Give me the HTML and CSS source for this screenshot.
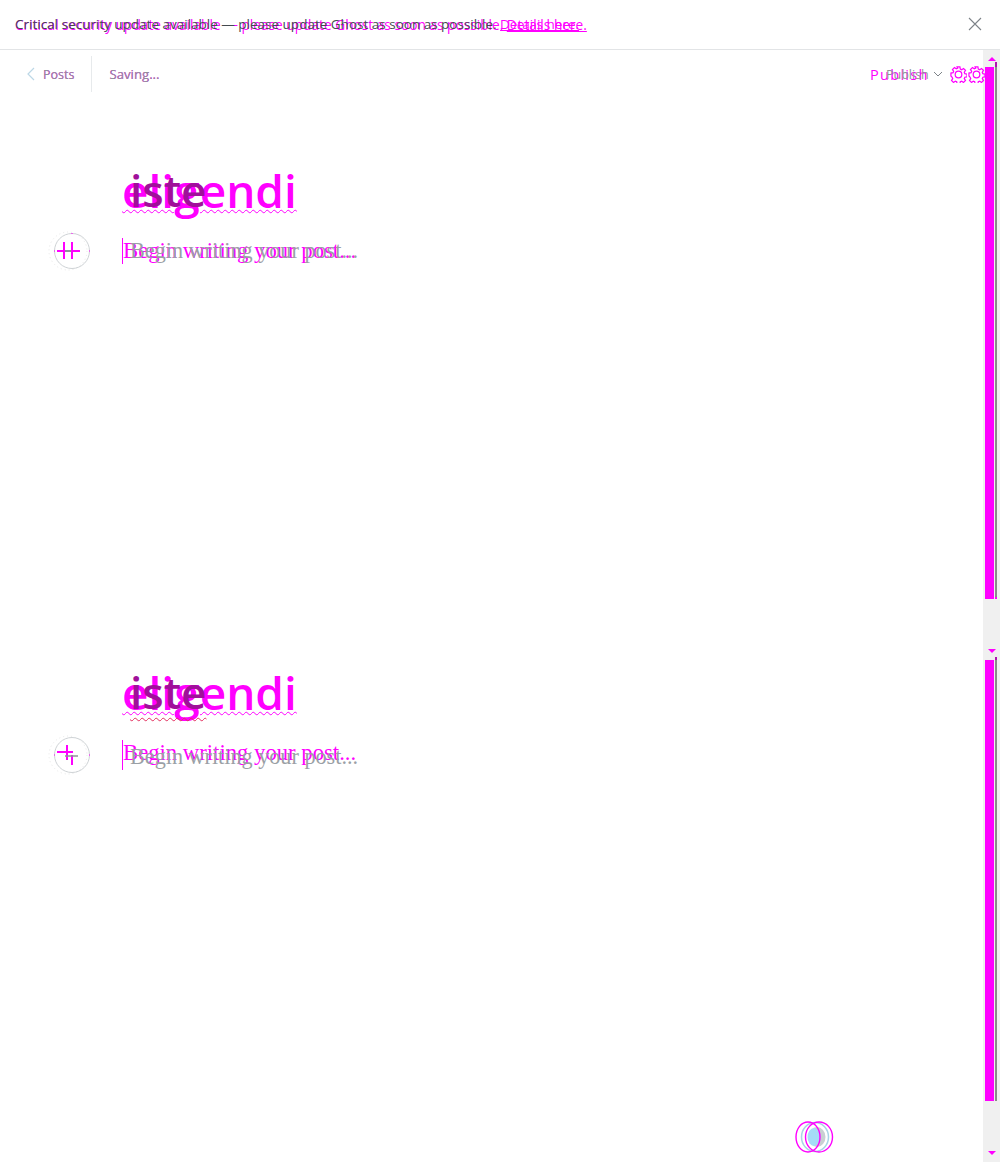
FILE: index.html
```html
<!DOCTYPE html>
<html lang="en">
  <head>
    <meta charset="UTF-8" />
    <meta name="viewport" content="width=device-width, initial-scale=1.0" />
    <title>editor</title>
    <link rel="stylesheet" href="styles.css">
  </head>
  <body>
    <div class="alert">
      <div class="alert__stack">
        <p class="alert__text alert__text--pink">Critical security update available — please update Ghost as soon as possible. <a href="#">Details here.</a></p>
        <p class="alert__text alert__text--dark">Critical security update available — please update Ghost as soon as possible. <a href="#">Details here.</a></p>
      </div>
      <svg class="alert__close" width="14" height="14" viewBox="0 0 14 14"><path d="M1 1l12 12M13 1L1 13" stroke="#7d8388" stroke-width="1.1" fill="none" /></svg>
    </div>

    <div class="main">
      <div class="editor">
        <section class="pane">
          <header class="bar">
            <div class="bar__left">
              <a class="bar__back" href="#">
                <svg width="9" height="14" viewBox="0 0 9 14"><path d="M8 1L2 7l6 6" stroke="#bcd7e6" stroke-width="1.2" fill="none" /></svg>
                <span class="stack">
                  <span class="pink">Posts</span>
                  <span class="grey">Posts</span>
                </span>
              </a>
              <span class="stack bar__status">
                <span class="pink">Saving...</span>
                <span class="grey">Saving...</span>
              </span>
            </div>
            <div class="bar__right">
              <span class="publish">
                <span class="publish__pink">Publish</span>
                <span class="publish__grey">Publish</span>
              </span>
              <svg class="chevron" width="10" height="6" viewBox="0 0 10 6"><path d="M1 1l4 4 4-4" stroke="#7d8388" fill="none" /></svg>
              <svg class="gear" width="17" height="17" viewBox="0 0 18 18"><use href="#gear" /></svg>
              <svg class="gear" width="17" height="17" viewBox="0 0 18 18"><use href="#gear" /></svg>
            </div>
          </header>

          <div class="post">
            <div class="title">
              <h1 class="title__pink">eligendi</h1>
              <h1 class="title__dark">iste</h1>
            </div>
            <div class="line">
              <span class="plus">
                <svg class="plus__icon" width="36" height="36" viewBox="0 0 36 36">
                  <circle cx="14" cy="18" r="19" stroke="#e8e8e8" stroke-dasharray="1 3" fill="none" />
                  <circle cx="18" cy="18" r="17.5" stroke="#cfd3d6" fill="none" />
                  <path d="M3 18h23M10 9v17M18 9v17" stroke="#f0f" stroke-width="2" fill="none" />
                  <path d="M11 18h6" stroke="#8f9499" stroke-width="2" fill="none" />
                  <path d="M18 0v1M0 18h1M35 18h1" stroke="#f0f" fill="none" />
                </svg>
              </span>
              <div class="line__text">
                <p class="hint hint--pink">Begin writing your post...</p>
                <p class="hint hint--grey">Begin writing your post...</p>
              </div>
            </div>
          </div>
        </section>

        <section class="pane pane--second">
          <div class="post">
            <div class="title">
              <h1 class="title__pink">eligendi</h1>
              <h1 class="title__dark title__dark--second">iste</h1>
            </div>
            <div class="line">
              <span class="plus">
                <svg class="plus__icon" width="36" height="36" viewBox="0 0 36 36">
                  <circle cx="14" cy="18" r="19" stroke="#e8e8e8" stroke-dasharray="1 3" fill="none" />
                  <circle cx="18" cy="18" r="17.5" stroke="#cfd3d6" fill="none" />
                  <path d="M3 15h16M13 8v15M18 18v10" stroke="#f0f" stroke-width="2" fill="none" />
                  <path d="M11 19h13" stroke="#8f9499" stroke-width="1.5" fill="none" />
                  <path d="M0 18h1M35 18h1" stroke="#f0f" fill="none" />
                </svg>
              </span>
              <div class="line__text">
                <p class="hint hint--pink">Begin writing your post...</p>
                <p class="hint hint--grey hint--low">Begin writing your post...</p>
              </div>
            </div>
          </div>
          <div class="word-count">
            <svg width="40" height="34" viewBox="0 0 40 34">
              <ellipse cx="21" cy="17" rx="13.500" ry="14.500" stroke="#a9d3e6" stroke-width="1.5" fill="none" />
              <ellipse cx="23" cy="17" rx="8.500" ry="10" fill="#c9cfd3" />
              <ellipse cx="20" cy="17" rx="6.500" ry="9" fill="#a5dcf7" />
              <ellipse cx="14" cy="17" rx="12" ry="15" stroke="#f0f" stroke-width="1.4" fill="none" />
              <ellipse cx="25" cy="17" rx="13.500" ry="15" stroke="#f0f" stroke-width="1.4" fill="none" />
            </svg>
          </div>
        </section>
      </div>

      <div class="scrollbar">
        <span class="arrow arrow--up"></span>
        <div class="thumb thumb--top"><span class="thumb__pink"></span><span class="thumb__grey"></span></div>
        <span class="arrow arrow--down arrow--mid"></span>
        <div class="thumb thumb--bottom"><span class="thumb__pink"></span><span class="thumb__grey"></span></div>
        <span class="arrow arrow--down arrow--end"></span>
      </div>
    </div>

    <svg width="0" height="0" class="defs">
      <defs>
        <g id="gear" fill="none" stroke="#f0f" stroke-width="1.3">
          <circle cx="9" cy="9" r="3.500" />
          <path d="M7.500 1h3l.4 2.300 1.500.6 1.900-1.300 2.100 2.100-1.300 1.900.6 1.500 2.300.4v3l-2.300.4-.6 1.500 1.300 1.900-2.100 2.100-1.900-1.300-1.500.6-.4 2.300h-3l-.4-2.300-1.500-.6-1.900 1.300-2.100-2.100 1.300-1.900-.6-1.500L1 10.500v-3l2.300-.4.6-1.500-1.300-1.900 2.100-2.100 1.900 1.300 1.500-.6z" />
        </g>
      </defs>
    </svg>
  </body>
</html>
```

FILE: styles.css
```css
* {
  margin: 0;
  padding: 0;
  box-sizing: border-box;
}

:root {
  font-family: "Open Sans", "Noto Sans", sans-serif;
}

html,
body {
  height: 100%;
  overflow: hidden;
}

body {
  display: flex;
  flex-direction: column;
  background: #fff;
}

a {
  color: inherit;
}

.defs {
  display: block;
  height: 0;
}

.stack {
  display: inline-grid;
}

.stack > span {
  grid-area: 1 / 1;
}

.pink {
  color: #f0f;
}

.grey {
  color: #8e9499;
}

/* alert */
.alert {
  height: 50px;
  flex: none;
  display: flex;
  align-items: center;
  justify-content: space-between;
  padding: 0 18px 0 15px;
  border-bottom: 1px solid #e2e4e6;
}

.alert__stack {
  display: grid;
  font-size: 13.7px;
}

.alert__text {
  grid-area: 1 / 1;
  white-space: nowrap;
}

.alert__text--pink {
  color: #f0f;
}

.alert__text--dark {
  color: #444a50;
  font-size: 13.5px;
}

.alert__text--dark a {
  color: #f0f;
}

.alert__close {
  margin-bottom: 2px;
}

/* layout */
.main {
  flex: 1;
  display: flex;
  min-height: 0;
}

.editor {
  flex: 1;
  min-width: 0;
  display: flex;
  flex-direction: column;
}

.pane {
  height: 502px;
  flex: none;
}

.pane--second {
  flex: 1;
  padding-top: 112px;
  display: flex;
  flex-direction: column;
}

/* top bar */
.bar {
  height: 42px;
  display: flex;
  align-items: center;
  justify-content: space-between;
  padding-top: 6px;
}

.bar__left {
  display: flex;
  align-items: center;
  height: 100%;
  padding-left: 26px;
  font-size: 12.5px;
}

.bar__back {
  display: flex;
  align-items: center;
  gap: 8px;
  height: 100%;
  padding-right: 17px;
  border-right: 1px solid #e7eaec;
  text-decoration: none;
}

.bar__status {
  margin-left: 17px;
  font-size: 13.2px;
}

.bar__right {
  position: relative;
  z-index: 1;
  display: flex;
  align-items: center;
  margin-right: -2px;
}

.publish {
  display: inline-grid;
  grid-template-columns: 16px 43px;
  align-items: center;
}

.publish__pink {
  grid-area: 1 / 1 / 1 / 3;
  color: #f0f;
  font-size: 14.500px;
  letter-spacing: 1.3px;
}

.publish__grey {
  grid-area: 1 / 2;
  color: #8e9499;
  font-size: 12.500px;
}

.chevron {
  margin-left: 4px;
  margin-right: 7px;
}

.gear {
  flex: none;
}

.gear + .gear {
  margin-left: 1px;
}

/* post */
.post {
  padding-top: 70px;
}

.pane--second .post {
  padding-top: 0;
}

.title {
  display: grid;
  padding-left: 122px;
  height: 60px;
}

.title h1 {
  grid-area: 1 / 1;
  font-size: 46px;
  font-weight: 600;
  line-height: 56px;
}

.title__pink {
  color: #f0f;
  text-decoration: underline wavy #f0f 1px;
}

.title .title__dark {
  color: #a0109a;
  margin-left: 8px;
  font-size: 44px;
}

.title .title__dark--second {
  text-decoration: underline wavy #e2305e 1px;
  text-underline-offset: 8px;
}

.line {
  display: flex;
  align-items: center;
  margin-top: 11px;
  padding-left: 54px;
}

.pane--second .line {
  margin-top: 13px;
}

.plus {
  display: flex;
  width: 36px;
  height: 36px;
}

.plus__icon {
  overflow: visible;
}

.line__text {
  display: grid;
  margin-left: 32px;
  font-family: "Liberation Serif", serif;
  font-size: 22.700px;
}

.hint {
  grid-area: 1 / 1;
}

.hint--pink {
  color: #f0f;
  border-left: 1px solid #f0f;
}

.hint--grey {
  color: #9aa0a5;
  margin-left: 8px;
  font-size: 22.200px;
}

.hint--low {
  margin-top: 4px;
}

.word-count {
  margin-top: auto;
  margin-bottom: 8px;
  padding-right: 149px;
  display: flex;
  justify-content: flex-end;
}

/* scrollbar */
.scrollbar {
  flex: none;
  width: 17px;
  background: #f0f0f0;
  display: flex;
  flex-direction: column;
  align-items: center;
}

.arrow {
  flex: none;
  width: 0;
  height: 0;
  border-left: 4px solid transparent;
  border-right: 4px solid transparent;
}

.arrow--up {
  margin-top: 7px;
  border-bottom: 4px solid #f0f;
}

.arrow--down {
  border-top: 4px solid #f0f;
}

.arrow--mid {
  margin-top: 50px;
}

.arrow--end {
  margin-top: 50px;
}

.thumb {
  flex: none;
  display: flex;
  gap: 1px;
  width: 12px;
  align-self: flex-start;
  margin-left: 2px;
}

.thumb--top {
  height: 537px;
  margin-top: 1px;
}

.thumb--bottom {
  height: 444px;
  margin-top: 4px;
}

.thumb__pink {
  flex: 1;
  background: #f0f;
}

.thumb--top .thumb__pink {
  margin-top: 5px;
}

.thumb--bottom .thumb__pink {
  margin-top: 3px;
}

.thumb__grey {
  width: 2px;
  background: #8a8a8a;
}

.thumb--top .thumb__grey {
  border-top: 5px solid #b015b0;
  border-bottom: 2px solid #f0f;
}

.thumb--bottom .thumb__grey {
  border-top: 3px solid #b015b0;
}
```
